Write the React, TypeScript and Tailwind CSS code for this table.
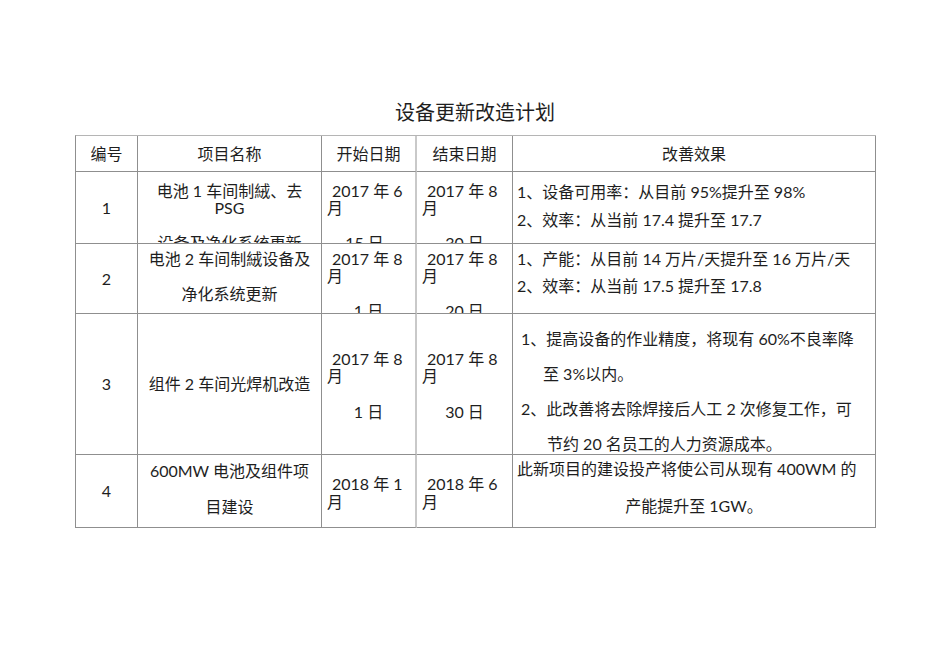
import React from 'react';

// 设备更新改造计划 table, laid out like the exported Word page
const font = { fontFamily: '"Lato", "Noto Sans CJK SC", sans-serif' };

const cell = 'border-r border-b border-[#8f8f8f] overflow-hidden text-[16px] text-[#1e1e1e]';
const dateCell = 'border-r-2 border-r-[#c9c9c9]';

export default function App() {
  return (
    <div className="w-[950px] h-[672px] bg-white" style={font}>
      <div className="h-[135px] pt-[98px] text-center text-[20px] leading-[28px] text-[#1e1e1e]">
        设备更新改造计划
      </div>

      <div className="ml-[75px] w-[801px] border-l border-t border-l-[#8f8f8f] border-t-[#b5b5b5] grid grid-cols-[62px_184px_95px_96px_363px] grid-rows-[36px_72px_70px_141px_73px]">
        {/* header */}
        <div className={`${cell} flex items-center justify-center`}>编号</div>
        <div className={`${cell} flex items-center justify-center`}>项目名称</div>
        <div className={`${cell} ${dateCell} flex items-center justify-center`}>开始日期</div>
        <div className={`${cell} flex items-center justify-center`}>结束日期</div>
        <div className={`${cell} flex items-center justify-center`}>改善效果</div>

        {/* row 1 */}
        <div className={`${cell} flex items-center justify-center`}>1</div>
        <div className={`${cell} pt-[9.5px] text-center leading-[17px]`}>
          <div>电池 1 车间制絨、去</div>
          <div>PSG</div>
          <div className="mt-[18px]">设备及净化系统更新</div>
        </div>
        <div className={`${cell} ${dateCell} pt-[9.5px] leading-[17px]`}>
          <div className="pl-[10px]">2017 年 6</div>
          <div className="pl-[5px]">月</div>
          <div className="mt-[18px] text-center pr-[8px]">15 日</div>
        </div>
        <div className={`${cell} pt-[9.5px] leading-[17px]`}>
          <div className="pl-[10px]">2017 年 8</div>
          <div className="pl-[5px]">月</div>
          <div className="mt-[18px] text-center">30 日</div>
        </div>
        <div className={`${cell} pt-[6px] pl-[4px] leading-[28px]`}>
          <div>1、设备可用率：从目前 95%提升至 98%</div>
          <div>2、效率：从当前 17.4 提升至 17.7</div>
        </div>

        {/* row 2 */}
        <div className={`${cell} flex items-center justify-center`}>2</div>
        <div className={`${cell} pt-[5.5px] text-center leading-[17px]`}>
          <div>电池 2 车间制絨设备及</div>
          <div className="mt-[18px]">净化系统更新</div>
        </div>
        <div className={`${cell} ${dateCell} pt-[5.5px] leading-[17px]`}>
          <div className="pl-[10px]">2017 年 8</div>
          <div className="pl-[5px]">月</div>
          <div className="mt-[18px] text-center">1 日</div>
        </div>
        <div className={`${cell} pt-[5.5px] leading-[17px]`}>
          <div className="pl-[10px]">2017 年 8</div>
          <div className="pl-[5px]">月</div>
          <div className="mt-[18px] text-center">20 日</div>
        </div>
        <div className={`${cell} pt-[1px] pl-[4px] leading-[27px]`}>
          <div>1、产能：从目前 14 万片/天提升至 16 万片/天</div>
          <div>2、效率：从当前 17.5 提升至 17.8</div>
        </div>

        {/* row 3 */}
        <div className={`${cell} flex items-center justify-center`}>3</div>
        <div className={`${cell} flex items-center justify-center`}>组件 2 车间光焊机改造</div>
        <div className={`${cell} ${dateCell} pt-[35.5px] leading-[17px]`}>
          <div className="pl-[10px]">2017 年 8</div>
          <div className="pl-[5px]">月</div>
          <div className="mt-[19px] text-center">1 日</div>
        </div>
        <div className={`${cell} pt-[35.5px] leading-[17px]`}>
          <div className="pl-[10px]">2017 年 8</div>
          <div className="pl-[5px]">月</div>
          <div className="mt-[19px] text-center">30 日</div>
        </div>
        <div className={`${cell} pt-[6.5px] pl-[8px] leading-[35px]`}>
          <div>1、提高设备的作业精度，将现有 60%不良率降</div>
          <div className="pl-[22px]">至 3%以内。</div>
          <div>2、此改善将去除焊接后人工 2 次修复工作，可</div>
          <div className="pl-[26px]">节约 20 名员工的人力资源成本。</div>
        </div>

        {/* row 4 */}
        <div className={`${cell} flex items-center justify-center`}>4</div>
        <div className={`${cell} pt-[6.5px] text-center leading-[17px]`}>
          <div>600MW 电池及组件项</div>
          <div className="mt-[19px]">目建设</div>
        </div>
        <div className={`${cell} ${dateCell} pt-[19.5px] leading-[18px]`}>
          <div className="pl-[10px]">2018 年 1</div>
          <div className="pl-[5px]">月</div>
        </div>
        <div className={`${cell} pt-[19.5px] leading-[18px]`}>
          <div className="pl-[10px]">2018 年 6</div>
          <div className="pl-[5px]">月</div>
        </div>
        <div className={`${cell} pt-[4.5px] leading-[17px]`}>
          <div className="pl-[4px]">此新项目的建设投产将使公司从现有 400WM 的</div>
          <div className="mt-[20px] text-center">产能提升至 1GW。</div>
        </div>
      </div>
    </div>
  );
}
